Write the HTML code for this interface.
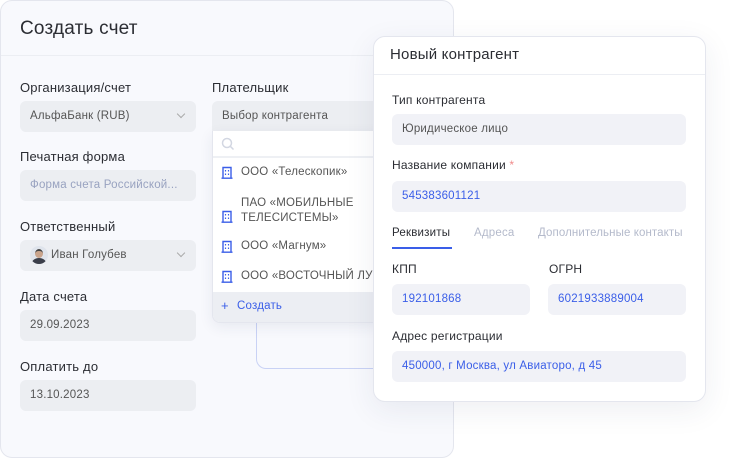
<!DOCTYPE html>
<html><head><meta charset="utf-8"><style>
*{box-sizing:border-box;margin:0;padding:0}
body{width:753px;height:458px;background:#fff;font-family:"Liberation Sans","Noto Sans CJK SC",sans-serif;position:relative;overflow:hidden;color:#2b2d33;letter-spacing:.2px}
.abs{position:absolute}
.main{left:0;top:0;width:454px;height:458px;background:#f8f9fd;border:1px solid #e4e6ee;border-radius:12px}
.lbl{font-size:13px;color:#2b2d33}
.inp{background:#eceef2;border-radius:6px;height:31px;font-size:11.5px;color:#555;padding:9px 10px}
.chev{position:absolute;right:12px;top:10px;width:6px;height:6px;border-right:1.5px solid #aaa;border-bottom:1.5px solid #aaa;transform:rotate(45deg)}
.card{left:373px;top:36px;width:333px;height:366px;background:#fff;border:1px solid #e4e6ee;border-radius:12px;box-shadow:0 8px 30px rgba(40,50,90,.08)}
.inp2{background:#f1f2f7;border-radius:6px;height:31px;font-size:11.5px;color:#555;padding:9px 10px}
.blue{color:#3a5ee8}
.item{font-size:11.5px;color:#555;position:absolute;left:28px}
.ic{position:absolute;left:8px}
</style></head><body>
<div class="abs main"></div>
<div class="abs" style="left:20px;top:18px;font-size:19px;color:#2b2d33">Создать счет</div>
<div class="abs" style="left:1px;top:55px;width:452px;height:1px;background:#eceef3"></div>

<div class="abs lbl" style="left:20px;top:80px">Организация/счет</div>
<div class="abs inp" style="left:20px;top:101px;width:176px">АльфаБанк (RUB)<span class="chev"></span></div>
<div class="abs lbl" style="left:20px;top:149px">Печатная форма</div>
<div class="abs inp" style="left:20px;top:170px;width:176px;color:#98a2c0">Форма счета Российской...</div>
<div class="abs lbl" style="left:20px;top:219px">Ответственный</div>
<div class="abs inp" style="left:20px;top:240px;width:176px;padding-left:31px">Иван Голубев<span class="chev"></span></div>
<div class="abs" style="left:30px;top:246px;width:18px;height:18px;border-radius:50%;background:#dfe4ec;overflow:hidden">
 <div class="abs" style="left:5px;top:3px;width:8px;height:9px;border-radius:50%;background:#c9a48c;border-top:2px solid #444"></div>
 <div class="abs" style="left:2px;top:12px;width:14px;height:10px;border-radius:50%;background:#3b3f4a"></div>
</div>
<div class="abs lbl" style="left:20px;top:289px">Дата счета</div>
<div class="abs inp" style="left:20px;top:310px;width:176px">29.09.2023</div>
<div class="abs lbl" style="left:20px;top:359px">Оплатить до</div>
<div class="abs inp" style="left:20px;top:380px;width:176px">13.10.2023</div>

<div class="abs lbl" style="left:212px;top:80px">Плательщик</div>
<div class="abs inp" style="left:212px;top:101px;width:170px;border-radius:6px 0 0 0">Выбор контрагента</div>
<div class="abs" style="left:256px;top:322px;width:130px;height:47px;border-left:1px solid #c9d2f5;border-bottom:1px solid #c9d2f5;border-bottom-left-radius:10px"></div>
<div class="abs" style="left:212px;top:131px;width:170px;height:192px;background:#fff;border:1px solid #e4e6ee;border-top:none;border-radius:0 0 8px 8px;box-shadow:0 4px 14px rgba(40,50,90,.08);overflow:hidden">
  <svg class="abs" style="left:8px;top:6px" width="14" height="14" viewBox="0 0 14 14"><circle cx="6" cy="6" r="4.5" fill="none" stroke="#d3d7e2" stroke-width="1.5"/><path d="M9.3 9.3L12.5 12.5" stroke="#d3d7e2" stroke-width="1.5"/></svg>
  <div class="abs" style="left:0;top:25px;width:170px;height:2px;background:#eef0f4"></div>
  <svg class="ic" style="top:35px" width="12" height="13" viewBox="0 0 12 13"><path d="M2 12V1.5h8V12M0.5 12.2h11" fill="none" stroke="#3a5ee8" stroke-width="1.4"/><path d="M4.5 4v1.5M7.5 4v1.5M4.5 7.5v1.5M7.5 7.5v1.5" stroke="#3a5ee8" stroke-width="1.2"/></svg>
  <div class="item" style="top:35px">ООО «Телескопик»</div>
  <svg class="ic" style="top:79px" width="12" height="13" viewBox="0 0 12 13"><path d="M2 12V1.5h8V12M0.5 12.2h11" fill="none" stroke="#3a5ee8" stroke-width="1.4"/><path d="M4.5 4v1.5M7.5 4v1.5M4.5 7.5v1.5M7.5 7.5v1.5" stroke="#3a5ee8" stroke-width="1.2"/></svg>
  <div class="item" style="top:65px;line-height:15px">ПАО «МОБИЛЬНЫЕ<br>ТЕЛЕСИСТЕМЫ»</div>
  <svg class="ic" style="top:109px" width="12" height="13" viewBox="0 0 12 13"><path d="M2 12V1.5h8V12M0.5 12.2h11" fill="none" stroke="#3a5ee8" stroke-width="1.4"/><path d="M4.5 4v1.5M7.5 4v1.5M4.5 7.5v1.5M7.5 7.5v1.5" stroke="#3a5ee8" stroke-width="1.2"/></svg>
  <div class="item" style="top:109px">ООО «Магнум»</div>
  <svg class="ic" style="top:139px" width="12" height="13" viewBox="0 0 12 13"><path d="M2 12V1.5h8V12M0.5 12.2h11" fill="none" stroke="#3a5ee8" stroke-width="1.4"/><path d="M4.5 4v1.5M7.5 4v1.5M4.5 7.5v1.5M7.5 7.5v1.5" stroke="#3a5ee8" stroke-width="1.2"/></svg>
  <div class="item" style="top:139px;white-space:nowrap">ООО «ВОСТОЧНЫЙ ЛУЧ»</div>
  <div class="abs" style="left:0;top:161px;width:170px;height:31px;background:#eceef3"></div>
  <div class="abs blue" style="left:8px;top:167px;font-size:13px">+</div>
  <div class="abs blue" style="left:24px;top:169px;font-size:11.5px">Создать</div>
</div>

<div class="abs card"></div>
<div class="abs" style="left:390px;top:46px;font-size:15px;color:#2b2d33">Новый контрагент</div>
<div class="abs" style="left:374px;top:74px;width:331px;height:1px;background:#eceef3"></div>
<div class="abs lbl" style="left:392px;top:93px;font-size:12px">Тип контрагента</div>
<div class="abs inp2" style="left:392px;top:114px;width:294px">Юридическое лицо</div>
<div class="abs lbl" style="left:392px;top:158px;font-size:12px">Название компании <span style="color:#f08a8a">*</span></div>
<div class="abs inp2 blue" style="left:392px;top:181px;width:294px">545383601121</div>
<div class="abs" style="left:392px;top:227px;font-size:11.5px;color:#2b2d33">Реквизиты</div>
<div class="abs" style="left:474px;top:227px;font-size:11.5px;color:#b4bacb">Адреса</div>
<div class="abs" style="left:538px;top:227px;font-size:11.5px;color:#b4bacb;letter-spacing:.1px">Дополнительные контакты</div>
<div class="abs" style="left:392px;top:247px;width:60px;height:2px;background:#3a5ee8"></div>
<div class="abs lbl" style="left:392px;top:262px;font-size:12px">КПП</div>
<div class="abs inp2 blue" style="left:392px;top:284px;width:138px">192101868</div>
<div class="abs lbl" style="left:549px;top:262px;font-size:12px">ОГРН</div>
<div class="abs inp2 blue" style="left:548px;top:284px;width:138px">6021933889004</div>
<div class="abs lbl" style="left:392px;top:329px;font-size:12px">Адрес регистрации</div>
<div class="abs inp2 blue" style="left:392px;top:351px;width:294px">450000, г Москва, ул Авиаторо, д 45</div>
</body></html>
